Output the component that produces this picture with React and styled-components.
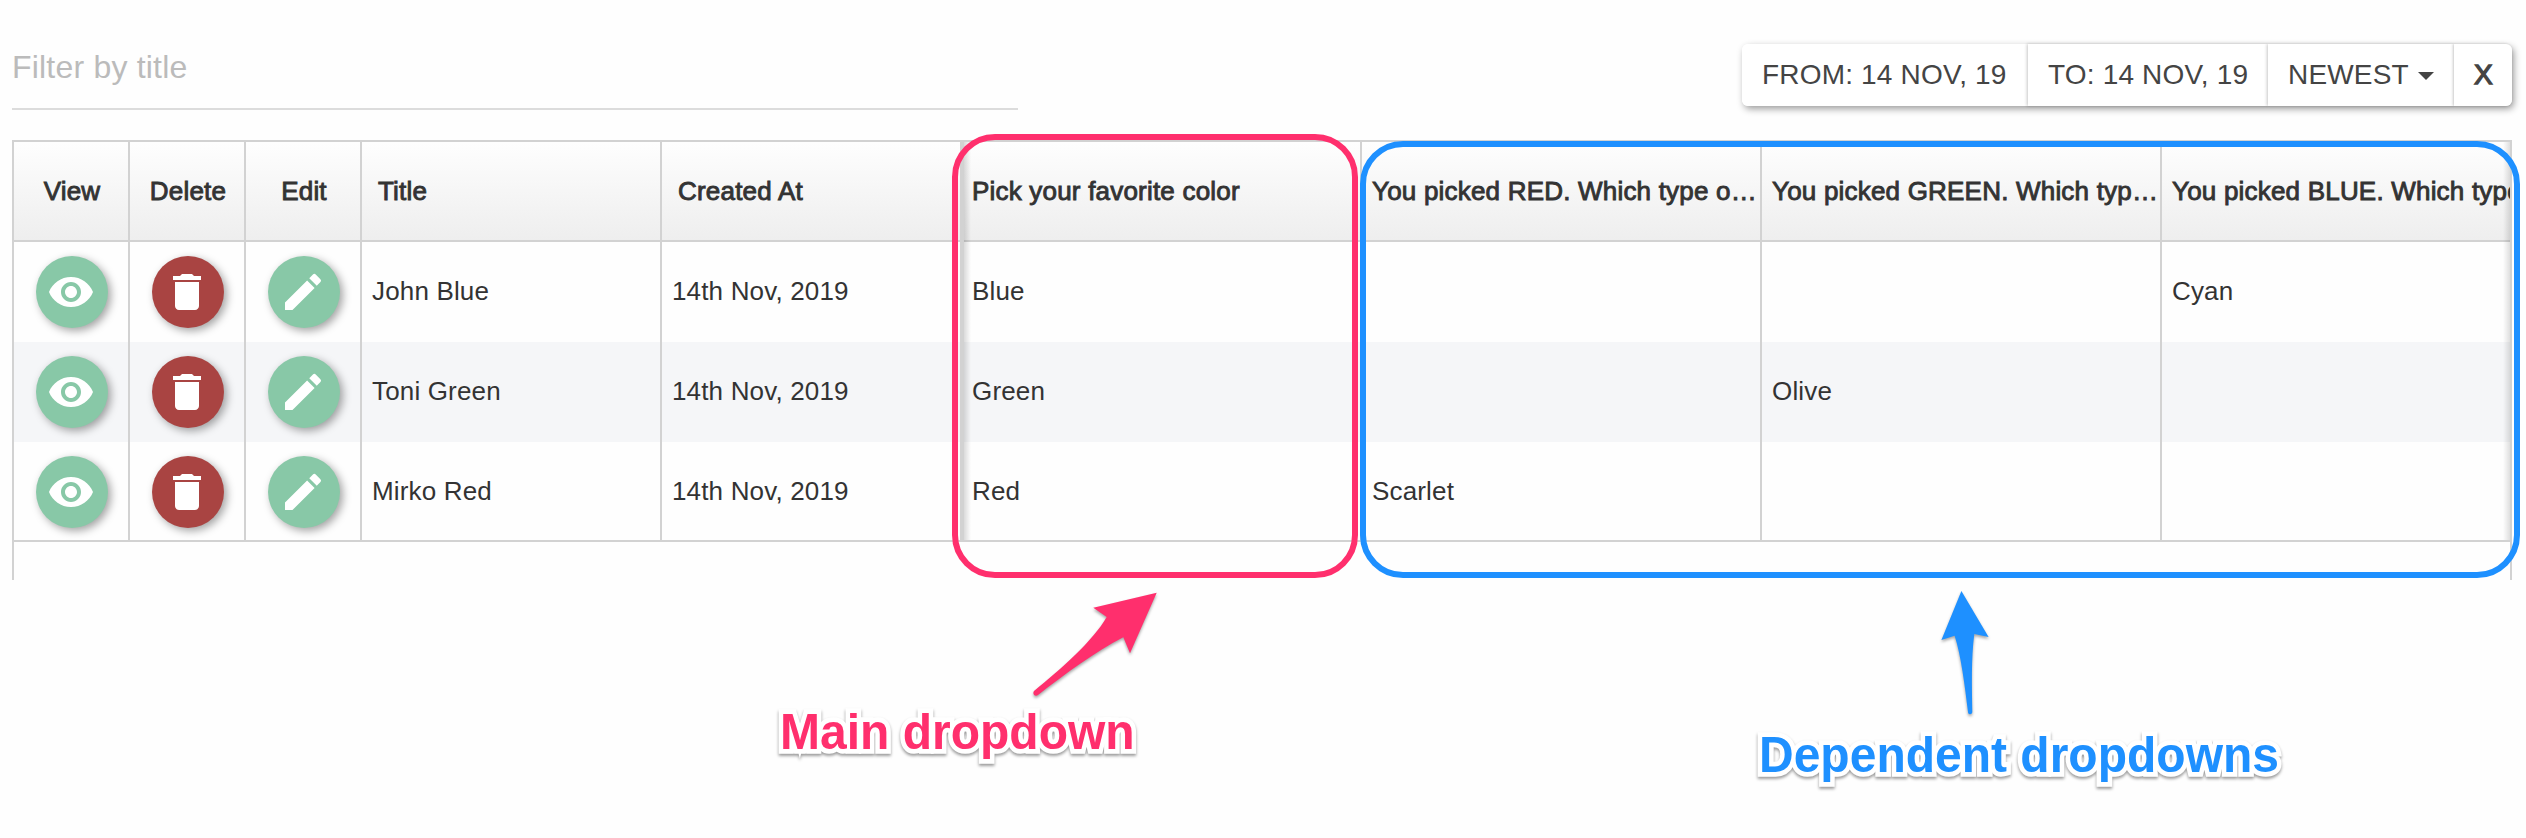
import React from "react";
import styled, { createGlobalStyle } from "styled-components";
import { MdVisibility, MdDelete, MdEdit } from "react-icons/md";

const LINE = "#d2d2d2";
const PINK = "#ff2f6d";
const BLUE = "#1e90ff";

const GlobalStyle = createGlobalStyle`
  * { box-sizing: border-box; }
  body {
    margin: 0;
    background: #fefefe;
    color: #333;
    font-family: "Liberation Sans", Arial, sans-serif;
    overflow: hidden;
  }
`;

const Page = styled.main`
  position: relative;
  width: 2526px;
  height: 838px;
  padding: 0 14px 0 12px;
`;

const TopBar = styled.header`
  display: flex;
  justify-content: space-between;
  align-items: flex-end;
  height: 110px;
  margin-bottom: 30px;
`;

const FilterField = styled.div`
  width: 1006px;
  height: 84px;
  padding-top: 1px;
  border-bottom: 2px solid #dcdcdc;
  color: #bbb;
  font-size: 32px;
  letter-spacing: 0.2px;
  line-height: 81px;
`;

const ButtonGroup = styled.div`
  display: flex;
  height: 62px;
  margin-bottom: 4px;
  border-radius: 6px;
  box-shadow: 2px 3px 7px rgba(0, 0, 0, 0.38);
`;

const GroupButton = styled.button`
  display: flex;
  align-items: center;
  gap: 9px;
  width: ${(p) => p.$width}px;
  padding: 0 0 1px 20px;
  border: 0;
  background: #fff;
  color: #444;
  font: 28px "Liberation Sans", Arial, sans-serif;
  letter-spacing: 0.18px;
  white-space: nowrap;
  -webkit-text-stroke: ${(p) => (p.$bold ? "1.3px #444" : "0")};
  & + & { box-shadow: -1px 0 3px rgba(0, 0, 0, 0.22); }
  &:first-child { border-radius: 6px 0 0 6px; }
  &:last-child { border-radius: 0 6px 6px 0; }
`;

const Caret = styled.i`
  margin-top: 3px;
  border: 8px solid transparent;
  border-top-color: #444;
  border-bottom: 0;
`;

const Table = styled.section`
  display: flex;
  width: 2500px;
  height: 440px;
  border: 2px solid ${LINE};
  border-bottom: 0;
`;

const FrozenPane = styled.div`
  width: 948px;
  overflow: hidden;
`;

const ScrollPane = styled.div`
  flex: 1;
  position: relative;
  height: 400px;
  overflow: hidden;
  border-left: 2px solid ${LINE};
  &::before,
  &::after {
    content: "";
    position: absolute;
    top: 0;
    height: 398px;
    width: 7px;
    z-index: 1;
  }
  &::before {
    left: 0;
    background: linear-gradient(to right, rgba(0, 0, 0, 0.14), transparent);
  }
  &::after {
    right: 0;
    background: linear-gradient(to left, rgba(0, 0, 0, 0.12), transparent);
  }
`;

const Row = styled.div`
  display: flex;
  width: 1600px;
  height: 100px;
  background: ${(p) => (p.$striped ? "#f5f6f8" : "transparent")};
  ${(p) => p.$last && `border-bottom: 2px solid ${LINE};`}
`;

const HeadRow = styled(Row)`
  border-bottom: 2px solid ${LINE};
  background: linear-gradient(#fefefe, #eee);
`;

const Cell = styled.div`
  flex: none;
  display: flex;
  align-items: center;
  width: ${(p) => p.$width}px;
  height: 100%;
  padding: 0 0 ${(p) => (p.$last ? 0 : 2)}px ${(p) => p.$pad ?? 10}px;
  border-right: 2px solid ${LINE};
  font-size: 26px;
  letter-spacing: 0.16px;
  white-space: nowrap;
`;

const HeadCell = styled(Cell)`
  padding-bottom: 0;
  letter-spacing: 0.2px;
  -webkit-text-stroke: 0.9px #333;
  ${(p) => p.$center && "padding-left: 2px; justify-content: center;"}
`;

const ActionCell = styled(Cell)`
  padding: 14px 0 0 22px;
  align-items: flex-start;
`;

const ActionButton = styled.button`
  display: flex;
  align-items: center;
  justify-content: center;
  width: 72px;
  height: 72px;
  padding: 0 2px 0 0;
  border: 0;
  border-radius: 50%;
  background: ${(p) => (p.$danger ? "#a94442" : "#88c8a7")};
  color: #fff;
  box-shadow: 3px 3px 8px rgba(0, 0, 0, 0.36);
  svg { width: 48px; height: 48px; }
`;

const Highlight = styled.div`
  position: absolute;
  z-index: 2;
  top: ${(p) => p.$top}px;
  left: ${(p) => p.$left}px;
  width: ${(p) => p.$width}px;
  height: ${(p) => p.$height}px;
  border: 6px solid ${(p) => p.$color};
  border-radius: 43px;
`;

const Callout = styled.div`
  position: absolute;
  left: ${(p) => p.$left}px;
  top: ${(p) => p.$top}px;
  color: ${(p) => p.$color};
  font-size: 48px;
  font-weight: bold;
  line-height: 54px;
  white-space: nowrap;
  transform: scaleY(1.04);
  transform-origin: 0 44px;
  -webkit-text-stroke: 9px #fff;
  paint-order: stroke fill;
  stroke-linejoin: round;
  filter: drop-shadow(0 2px 1.5px rgba(0, 0, 0, 0.4));
`;

const Arrow = styled.svg`
  position: absolute;
  left: ${(p) => p.$left}px;
  top: ${(p) => p.$top}px;
  overflow: visible;
  filter: drop-shadow(0 2px 1.5px rgba(0, 0, 0, 0.35));
`;

const records = [
  { title: "John Blue", date: "14th Nov, 2019", answers: ["Blue", "", "", "Cyan"] },
  { title: "Toni Green", date: "14th Nov, 2019", answers: ["Green", "", "Olive", ""] },
  { title: "Mirko Red", date: "14th Nov, 2019", answers: ["Red", "Scarlet", "", ""] },
];

const questions = [
  "Pick your favorite color",
  "You picked RED. Which type o…",
  "You picked GREEN. Which typ…",
  "You picked BLUE. Which type",
];

const firstWidth = (i) => (i === 0 ? 398 : 400);
const firstPad = (i) => (i === 0 ? 8 : 10);

export default function App() {
  return (
    <Page>
      <GlobalStyle />
      <TopBar>
        <FilterField>Filter by title</FilterField>
        <ButtonGroup>
          <GroupButton $width={286}>FROM: 14 NOV, 19</GroupButton>
          <GroupButton $width={240}>TO: 14 NOV, 19</GroupButton>
          <GroupButton $width={186}>NEWEST<Caret /></GroupButton>
          <GroupButton $width={58} $bold>X</GroupButton>
        </ButtonGroup>
      </TopBar>

      <Table>
        <FrozenPane>
          <HeadRow>
            <HeadCell $width={116} $center>View</HeadCell>
            <HeadCell $width={116} $center>Delete</HeadCell>
            <HeadCell $width={116} $center>Edit</HeadCell>
            <HeadCell $width={300} $pad={16}>Title</HeadCell>
            <HeadCell $width={300} $pad={16}>Created At</HeadCell>
          </HeadRow>
          {records.map((r, i) => (
            <Row key={r.title} $striped={i === 1} $last={i === 2}>
              <ActionCell $width={116}>
                <ActionButton aria-label="View"><MdVisibility /></ActionButton>
              </ActionCell>
              <ActionCell $width={116}>
                <ActionButton aria-label="Delete" $danger><MdDelete /></ActionButton>
              </ActionCell>
              <ActionCell $width={116}>
                <ActionButton aria-label="Edit"><MdEdit /></ActionButton>
              </ActionCell>
              <Cell $width={300} $last={i === 2}>{r.title}</Cell>
              <Cell $width={300} $last={i === 2}>{r.date}</Cell>
            </Row>
          ))}
        </FrozenPane>
        <ScrollPane>
          <HeadRow>
            {questions.map((q, i) => (
              <HeadCell key={q} $width={firstWidth(i)} $pad={firstPad(i)}>{q}</HeadCell>
            ))}
          </HeadRow>
          {records.map((r, i) => (
            <Row key={r.title} $striped={i === 1} $last={i === 2}>
              {r.answers.map((a, j) => (
                <Cell key={j} $width={firstWidth(j)} $pad={firstPad(j)} $last={i === 2}>{a}</Cell>
              ))}
            </Row>
          ))}
        </ScrollPane>
      </Table>

      <Highlight $color={PINK} $left={952} $top={134} $width={406} $height={444} />
      <Highlight $color={BLUE} $left={1360} $top={140.5} $width={1160} $height={437} />

      <Arrow $left={1033} $top={592} width="124" height="104" viewBox="0 0 124 104" fill={PINK}>
        <path d="M123.7 0.7 L60.3 15.7 L73.7 25 C60 49 28 77 1 99 C-1 102 2 105 5 103 C32 82 62 60 90.3 45.3 L97 61.3 Z" />
      </Arrow>
      <Arrow $left={1941} $top={591} width="48" height="124" viewBox="0 0 48 124" fill={BLUE}>
        <path d="M20.4 0 L0.4 49 L13.6 44.7 C20 64 24 96 27 121 C27 124 31 124 31.3 121 C31 96 30 68 33.3 43 L47.6 46 Z" />
      </Arrow>

      <Callout $color={PINK} $left={780} $top={706}>Main dropdown</Callout>
      <Callout $color={BLUE} $left={1759} $top={729}>Dependent dropdowns</Callout>
    </Page>
  );
}
